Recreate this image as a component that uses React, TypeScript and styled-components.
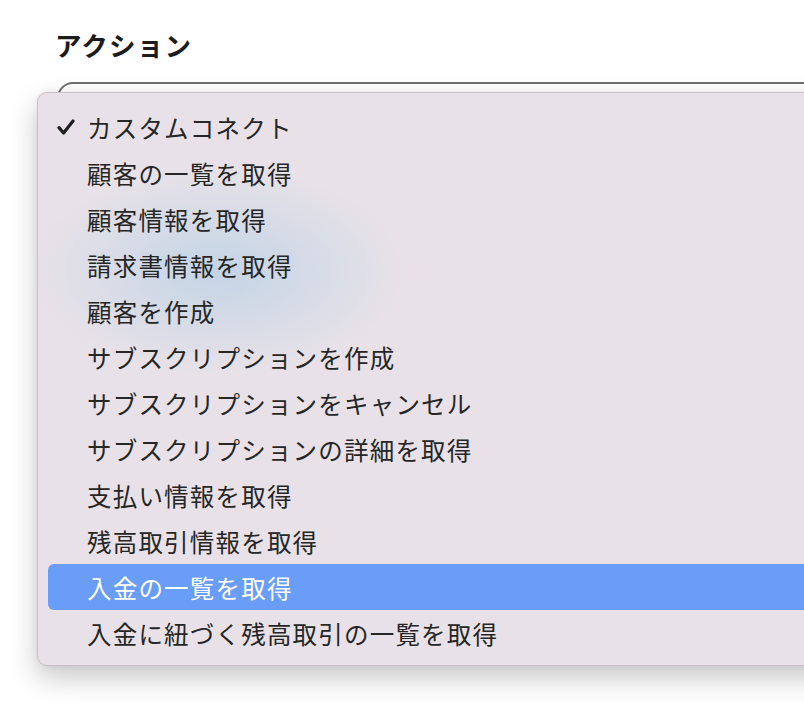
import React from 'react'
import styled, { createGlobalStyle } from 'styled-components'

const GlobalStyle = createGlobalStyle`
  html, body {
    margin: 0;
    padding: 0;
    background: #fff;
    overflow: hidden;
    font-family: "Noto Sans CJK JP", "Noto Sans", sans-serif;
  }
`

const actions = [
  'カスタムコネクト',
  '顧客の一覧を取得',
  '顧客情報を取得',
  '請求書情報を取得',
  '顧客を作成',
  'サブスクリプションを作成',
  'サブスクリプションをキャンセル',
  'サブスクリプションの詳細を取得',
  '支払い情報を取得',
  '残高取引情報を取得',
  '入金の一覧を取得',
  '入金に紐づく残高取引の一覧を取得',
]

const CheckMark = () => (
  <svg width='18' height='16' viewBox='0 0 18 16'>
    <path d='M2 8.6 L6.6 14 L16 2' fill='none' stroke='#1f1f1f' strokeWidth='3.2' strokeLinecap='round' strokeLinejoin='round' />
  </svg>
)

export default function App() {
  const selected = 0
  const hovered = 10

  return (
    <>
      <GlobalStyle />
      <SPage>
        <STitle>アクション</STitle>
        <SField>
          <SSelectBox />
          <SMenu>
            {actions.map((label, index) => (
              <SRow key={label} $active={index === hovered}>
                <SCheck>{index === selected && <CheckMark />}</SCheck>
                {label}
              </SRow>
            ))}
          </SMenu>
        </SField>
      </SPage>
    </>
  )
}

// スタイル
const SPage = styled.div`
  width: 100%;
  height: 718px;
  padding: 27px 0 0 55px;
  box-sizing: border-box;
  overflow: hidden;
`

const STitle = styled.h2`
  margin: 0;
  font-size: 26.5px;
  line-height: 36px;
  font-weight: 700;
  letter-spacing: 1.2px;
  color: #1c1c1c;
`

const SField = styled.div`
  position: relative;
  margin-top: 19px;
  margin-left: 2px;
`

const SSelectBox = styled.div`
  width: 860px;
  height: 52px;
  border: 2px solid #6e6e6e;
  border-radius: 16px;
  box-sizing: border-box;
`

const SMenu = styled.div`
  position: absolute;
  top: 10px;
  left: -20px;
  width: 860px;
  padding: 11px 10px 9px 10px;
  box-sizing: border-box;
  border: 1px solid #c6c2c6;
  border-radius: 10px;
  background:
    radial-gradient(ellipse 190px 105px at 180px 178px, rgba(180, 206, 228, 0.7), rgba(180, 206, 228, 0) 100%),
    #e8e2e8;
  box-shadow: 0 12px 28px rgba(0, 0, 0, 0.22), 0 0 6px rgba(0, 0, 0, 0.06);
`

const SRow = styled.div<{ $active: boolean }>`
  display: flex;
  align-items: center;
  height: 46px;
  padding-left: 9px;
  border-radius: 6px;
  font-size: 24.5px;
  letter-spacing: 1.2px;
  color: ${(p) => (p.$active ? '#ffffff' : '#262626')};
  background: ${(p) => (p.$active ? '#699df7' : 'transparent')};
`

const SCheck = styled.span`
  display: inline-flex;
  align-items: center;
  width: 30px;
  flex-shrink: 0;
`
